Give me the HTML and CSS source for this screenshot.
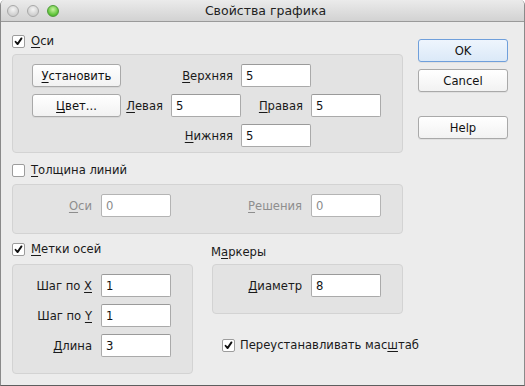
FILE: index.html
```html
<!DOCTYPE html>
<html lang="ru">
<head>
<meta charset="utf-8">
<title>Свойства графика</title>
<link rel="stylesheet" href="styles.css">
</head>
<body>
<div class="window">
  <div class="titlebar">
    <div class="lights">
      <span class="light gray"></span>
      <span class="light gray"></span>
      <span class="light green"></span>
    </div>
    <div class="title">Свойства графика</div>
  </div>
  <div class="content">
    <div class="main">
      <div class="check-row">
        <span class="cb checked"><svg viewBox="0 0 13 13"><path d="M3 6.8 L5.4 9.6 L10 2.8" /></svg></span>
        <span><u>О</u>си</span>
      </div>
      <div class="group g-axes">
        <button class="btn c1"><u>У</u>становить</button>
        <span class="lbl c23"><u>В</u>ерхняя</span>
        <input class="field c4" value="5">
        <button class="btn c1"><u>Ц</u>вет...</button>
        <span class="lbl c2"><u>Л</u>евая</span>
        <input class="field c3" value="5">
        <span class="lbl c4"><u>П</u>равая</span>
        <input class="field c5" value="5">
        <span class="lbl c13"><u>Н</u>ижняя</span>
        <input class="field c4" value="5">
      </div>

      <div class="check-row gap-top">
        <span class="cb"></span>
        <span><u>Т</u>олщина линий</span>
      </div>
      <div class="group g-width">
        <span class="lbl dis"><u>О</u>си</span>
        <input class="field dis" value="0" disabled>
        <span class="lbl dis"><u>Р</u>ешения</span>
        <input class="field dis" value="0" disabled>
      </div>

      <div class="bottom">
        <div class="col-left">
          <div class="check-row">
            <span class="cb checked"><svg viewBox="0 0 13 13"><path d="M3 6.8 L5.4 9.6 L10 2.8" /></svg></span>
            <span><u>М</u>етки осей</span>
          </div>
          <div class="group g-ticks">
            <span class="lbl">Шаг по <u>X</u></span>
            <input class="field" value="1">
            <span class="lbl">Шаг по <u>Y</u></span>
            <input class="field" value="1">
            <span class="lbl"><u>Д</u>лина</span>
            <input class="field" value="3">
          </div>
        </div>
        <div class="col-right">
          <div class="plain-head">М<u>а</u>ркеры</div>
          <div class="group g-markers">
            <span class="lbl"><u>Д</u>иаметр</span>
            <input class="field" value="8">
          </div>
          <div class="check-row rescale">
            <span class="cb checked"><svg viewBox="0 0 13 13"><path d="M3 6.8 L5.4 9.6 L10 2.8" /></svg></span>
            <span class="nowrap">Переустанавливать мас<u>ш</u>таб</span>
          </div>
        </div>
      </div>
    </div>
    <div class="side">
      <button class="btn side-btn default">OK</button>
      <button class="btn side-btn">Cancel</button>
      <button class="btn side-btn help">Help</button>
    </div>
  </div>
</div>
</body>
</html>
```

FILE: styles.css
```css
* { box-sizing: border-box; }
html, body {
  margin: 0;
  padding: 0;
  background: #ffffff;
}
body {
  font-family: "DejaVu Sans", "Liberation Sans", sans-serif;
  font-size: 11.6px;
  color: #1a1a1a;
}
u {
  text-decoration: underline;
  text-underline-offset: 2px;
  text-decoration-thickness: 1px;
}
.nowrap { white-space: nowrap; }
.window {
  width: 525px;
  height: 386px;
  background: #ececec;
  border: 1px solid #8a8a8a;
  border-top: none;
  border-bottom-color: #5e5e5e;
  border-radius: 5px 5px 0 0;
  overflow: hidden;
}
.titlebar {
  height: 22px;
  background: linear-gradient(#ebebeb, #d2d2d2);
  border-bottom: 1px solid #9a9a9a;
  display: flex;
  align-items: center;
}
.lights {
  display: flex;
  gap: 8px;
  padding-left: 6px;
}
.light {
  width: 12px;
  height: 12px;
  border-radius: 50%;
}
.light.gray {
  background: radial-gradient(circle at 50% 35%, #f4f4f4, #cfcfcf 70%);
  border: 1px solid #a8a8a8;
}
.light.green {
  background: radial-gradient(circle at 50% 35%, #c8f3a0, #5fc43a 65%, #3f9c24);
  border: 1px solid #4f9a3a;
}
.title {
  flex: 1;
  text-align: center;
  font-size: 12.5px;
  color: #222;
  margin-right: 52px;
}
.content {
  display: flex;
  padding-top: 13px;
}
.main {
  width: 402px;
  padding-left: 11px;
}
.side {
  display: flex;
  flex-direction: column;
  padding-left: 15px;
  padding-top: 4px;
  gap: 7px;
}
.check-row {
  display: flex;
  align-items: center;
  gap: 6px;
  height: 13px;
  line-height: 13px;
  margin-bottom: 6px;
}
.check-row.gap-top {
  margin-top: 11px;
  margin-bottom: 7px;
}
.cb {
  width: 13px;
  height: 13px;
  background: #fff;
  border: 1px solid #9c9c9c;
  border-radius: 2px;
  display: inline-flex;
  flex: none;
}
.cb svg {
  width: 11px;
  height: 11px;
}
.cb svg path {
  fill: none;
  stroke: #111;
  stroke-width: 2.2;
  stroke-linecap: round;
  stroke-linejoin: round;
}
.group {
  background: #e3e3e3;
  border: 1px solid #d3d3d3;
  border-radius: 4px;
  display: grid;
  align-items: center;
}
.g-axes {
  width: 391px;
  padding: 9px 0 5px 19px;
  grid-template-columns: 89px 50px 70px 70px 70px;
  grid-template-rows: 23px 23px 23px;
  row-gap: 7px;
}
.c1 { grid-column: 1; }
.c2 { grid-column: 2; }
.c3 { grid-column: 3; }
.c4 { grid-column: 4; }
.c5 { grid-column: 5; }
.c23 { grid-column: 2 / 4; }
.c13 { grid-column: 1 / 4; }
.lbl {
  text-align: right;
  padding-right: 8px;
  white-space: nowrap;
}
.lbl.dis { color: #8e8e8e; }
.g-width {
  width: 391px;
  padding: 9px 0 16px 0;
  grid-template-columns: 88px 70px 140px 70px;
  grid-template-rows: 23px;
}
.g-width .lbl { padding-right: 9px; }
.field {
  width: 70px;
  height: 23px;
  border: 1px solid #aaaaaa;
  border-top-color: #9a9a9a;
  border-radius: 2px;
  background: #fff;
  font: inherit;
  color: #111;
  padding: 0 0 0 4px;
  margin: 0;
  outline: none;
}
.field.dis {
  color: #8a8a8a;
  background: #fff;
  border-color: #b4b4b4;
}
.btn {
  font: inherit;
  color: #111;
  height: 23px;
  margin: 0;
  padding: 0;
  background: linear-gradient(#ffffff, #f2f2f2);
  border: 1px solid #a9a9a9;
  border-radius: 3px;
  box-shadow: 0 1px 0 rgba(0,0,0,0.05);
  text-align: center;
}
.g-axes .btn { width: 89px; }
.side-btn { width: 90px; }
.side-btn.default {
  background: linear-gradient(#eef5fd, #dbe9f8);
  border-color: #6f9fdb;
}
.side-btn.help { margin-top: 17px; }
.bottom {
  display: flex;
  gap: 19px;
  margin-top: 9px;
}
.col-left { width: 181px; }
.col-left .check-row { margin-bottom: 8px; }
.g-ticks {
  width: 181px;
  padding: 9px 0 16px 0;
  grid-template-columns: 88px 70px;
  grid-template-rows: 23px 23px 23px;
  row-gap: 7px;
}
.g-ticks .lbl { padding-right: 9px; }
.col-right { width: 191px; }
.plain-head {
  height: 13px;
  line-height: 13px;
  margin: 3px 0 5px -1px;
}
.g-markers {
  width: 191px;
  padding: 9px 0 16px 0;
  grid-template-columns: 98px 70px;
  grid-template-rows: 23px;
}
.g-markers .lbl { padding-right: 9px; }
.check-row.rescale {
  margin-top: 25px;
  padding-left: 10px;
  gap: 5px;
}
```
